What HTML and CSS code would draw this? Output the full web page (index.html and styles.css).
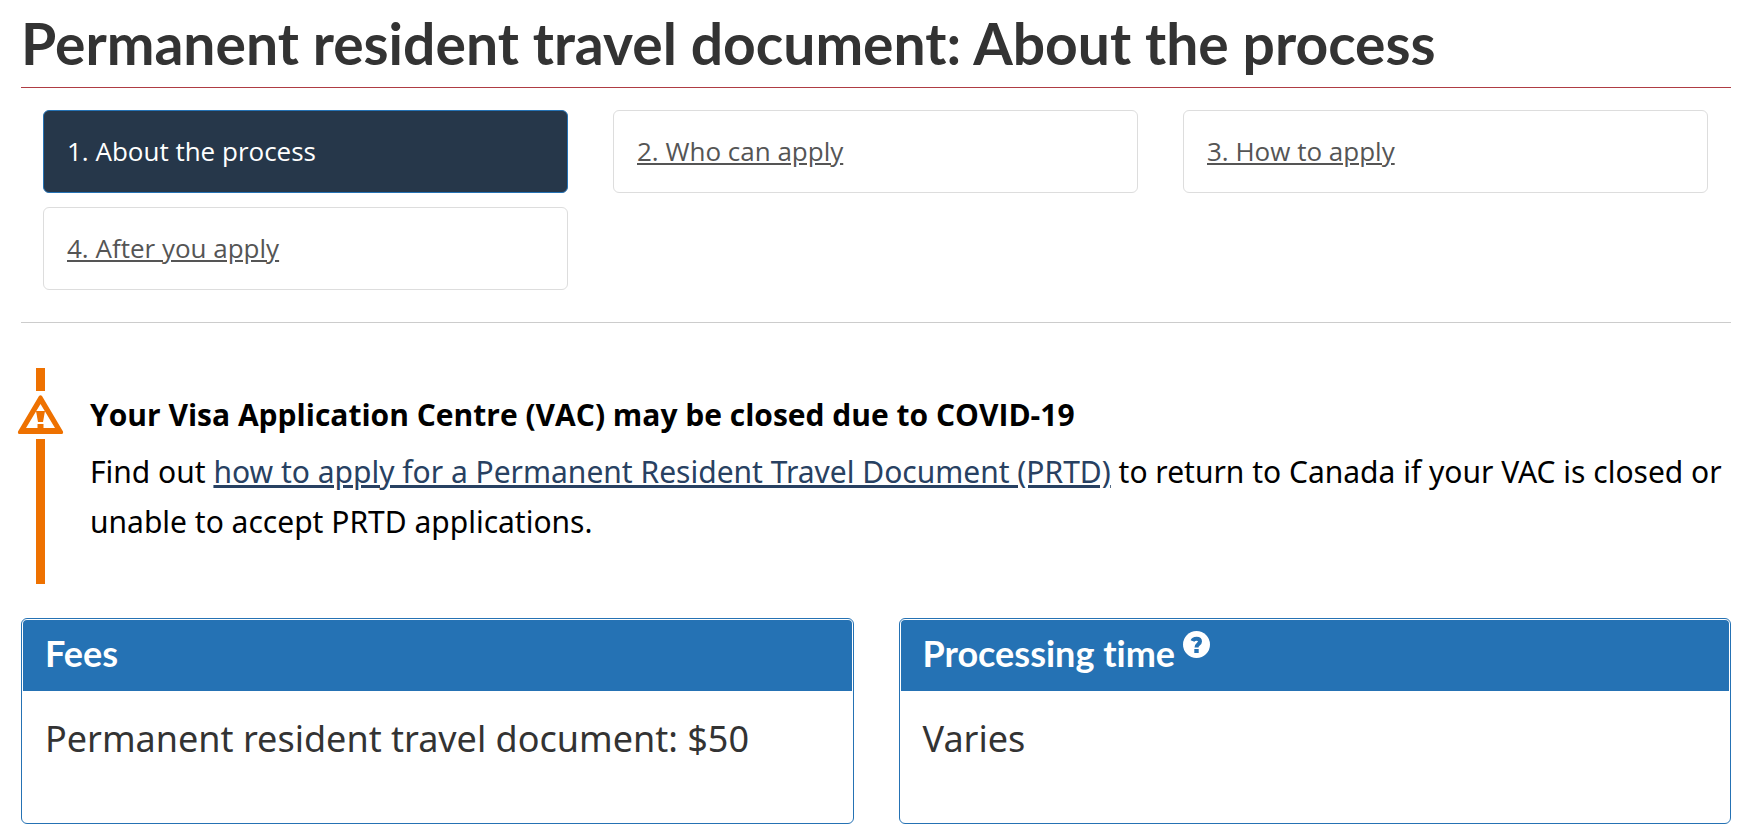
FILE: index.html
```
<!doctype html>
<html lang="en">
  <head>
    <meta charset="UTF-8" />
    <meta name="viewport" content="width=device-width, initial-scale=1.0" />
    <title>Permanent resident travel document: About the process</title>
    <link rel="stylesheet" href="styles.css">
  </head>
  <body>
    <main class="container">
      <h1>Permanent resident travel document: About the process</h1>

      <nav class="steps" aria-label="Steps">
        <ul class="steps-list">
          <li><a class="step active" aria-current="page">1. About the process</a></li>
          <li><a class="step" href="#who">2. Who can apply</a></li>
          <li><a class="step" href="#how">3. How to apply</a></li>
          <li><a class="step" href="#after">4. After you apply</a></li>
        </ul>
      </nav>

      <section class="alert">
        <div class="alert-marker">
          <span class="bar bar-top"></span>
          <svg class="alert-icon" viewBox="0 0 47 40" aria-hidden="true">
            <path fill="#ee7100" fill-rule="evenodd" d="M22 1 Q23.500 -0.500 25 1 L46 36.500 Q46.500 39 44.500 39 H2.500 Q0.500 39 1 36.500 Z M23.500 9 L9 33 H38 Z" />
            <path d="M19 16 H28 L26 27 H21 Z" fill="#ee7100" />
            <path d="M20.500 29 H26.500 V34 H20.500 Z" fill="#ee7100" />
          </svg>
          <span class="bar bar-bottom"></span>
        </div>
        <div class="alert-body">
          <h2>Your Visa Application Centre (VAC) may be closed due to COVID-19</h2>
          <p>Find out <a href="#prtd">how to apply for a Permanent Resident Travel Document (PRTD)</a> to return to Canada if your VAC is closed or unable to accept PRTD applications.</p>
        </div>
      </section>

      <div class="panels">
        <section class="panel">
          <header class="panel-heading">
            <h2>Fees</h2>
          </header>
          <p class="panel-body">Permanent resident travel document: $50</p>
        </section>
        <section class="panel">
          <header class="panel-heading">
            <h2>Processing time</h2>
            <a class="help" href="#help" aria-label="Help: processing time">
              <svg viewBox="0 0 27 27" aria-hidden="true">
                <circle cx="13.500" cy="13.500" r="13.500" fill="#fff" />
                <path d="M9.500 10 C10.500 7 17 6.500 17 10.500 C17 13 13.500 13 13.500 16.500" fill="none" stroke="#2572b4" stroke-width="4" />
                <rect x="11.300" y="18" width="4.400" height="4" fill="#2572b4" />
              </svg>
            </a>
          </header>
          <p class="panel-body">Varies</p>
        </section>
      </div>
    </main>
  </body>
</html>
```
FILE: styles.css
```
* {
  box-sizing: border-box;
}

body {
  margin: 0;
  background-color: #fff;
  color: #333;
  font-family: "Noto Sans", "Open Sans", sans-serif;
  font-size: 30px;
}

h1,
h2,
p {
  margin: 0;
}

.container {
  padding: 8px 14px 10px 21px;
}

h1 {
  padding-bottom: 9px;
  border-bottom: 1px solid #af3c43;
  font-family: Lato, sans-serif;
  font-size: 57px;
  line-height: 70px;
}

.steps {
  padding: 22px 23px 32px 22px;
  border-bottom: 1px solid #ccc;
}

.steps-list {
  display: grid;
  grid-template-columns: repeat(3, 1fr);
  gap: 14px 45px;
  margin: 0;
  padding: 0;
  list-style: none;
}

.step {
  display: block;
  padding: 21px 23px;
  border: 1px solid #ddd;
  border-radius: 6px;
  color: #555;
  font-family: "Open Sans", sans-serif;
  font-size: 26px;
  line-height: 39px;
}

.step.active {
  background-color: #26374a;
  border-color: #2572b4;
  color: #fff;
}

.alert {
  display: flex;
  gap: 26px;
  margin: 45px 0 34px -4px;
  color: #000;
}

.alert-marker {
  display: flex;
  flex-direction: column;
  align-items: center;
  gap: 4px;
  width: 47px;
}

.bar {
  width: 9px;
  background-color: #ee7100;
}

.bar-top {
  height: 23px;
}

.bar-bottom {
  flex: 1;
}

.alert-icon {
  width: 47px;
  height: 40px;
}

.alert-body {
  flex: 1;
  padding: 22px 0 37px;
  line-height: 50px;
}

.alert-body h2 {
  margin-bottom: 7px;
  font-family: "Open Sans", sans-serif;
  font-size: 30px;
}

.alert-body a {
  color: #284162;
}

.panels {
  display: grid;
  grid-template-columns: 1fr 1fr;
  gap: 45px;
}

.panel {
  padding: 1px;
  border: 1px solid #2572b4;
  border-radius: 6px;
}

.panel-heading {
  display: flex;
  gap: 8px;
  padding: 11px 22px 16px;
  background-color: #2572b4;
  border-radius: 4px 4px 0 0;
  color: #fff;
}

.panel-heading h2 {
  font-family: Lato, sans-serif;
  font-size: 36px;
  font-variant-ligatures: none;
  line-height: 44px;
}

.help svg {
  display: block;
  width: 27px;
  height: 27px;
}

.panel-body {
  padding: 22px 22px 57px;
  font-size: 36px;
  line-height: 52px;
}
```
